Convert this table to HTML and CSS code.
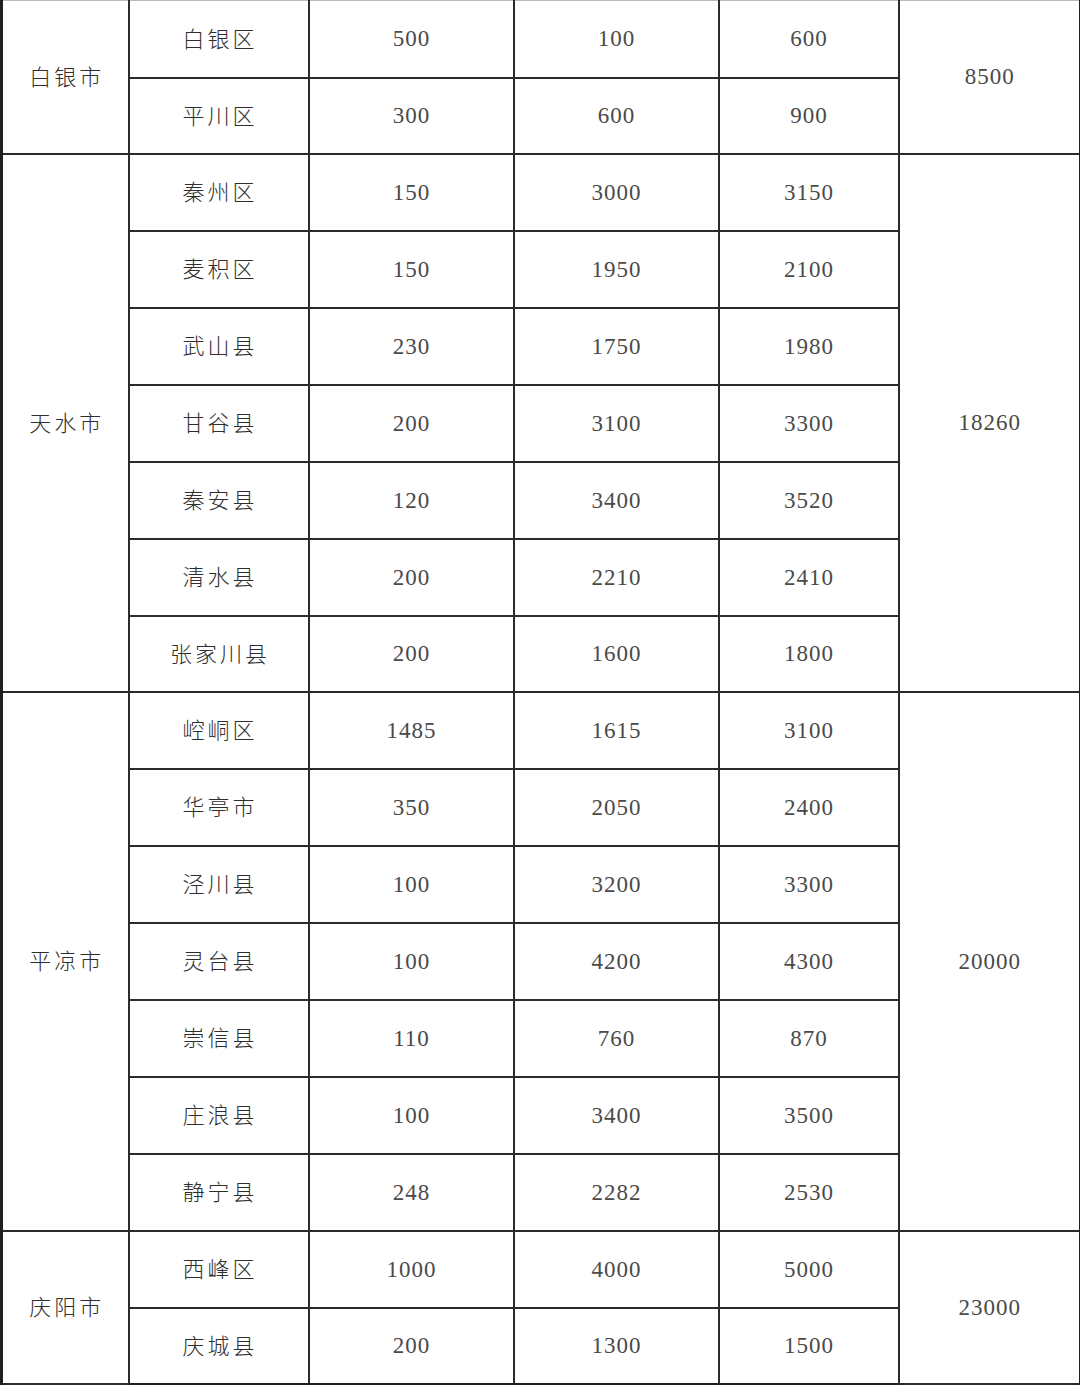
FILE: index.html
```html
<!DOCTYPE html>
<html lang="zh">
<head>
<meta charset="utf-8">
<title>表</title>
<link rel="stylesheet" href="styles.css">
</head>
<body>
<table class="grid">
<colgroup>
<col class="c1"><col class="c2"><col class="c3"><col class="c4"><col class="c5"><col class="c6">
</colgroup>
<tbody>
<tr class="first"><td class="city" rowspan="2">白银市</td><td class="name">白银区</td><td class="num">500</td><td class="num">100</td><td class="num">600</td><td class="num total" rowspan="2">8500</td></tr>
<tr class="short"><td class="name">平川区</td><td class="num">300</td><td class="num">600</td><td class="num">900</td></tr>

<tr><td class="city" rowspan="7">天水市</td><td class="name">秦州区</td><td class="num">150</td><td class="num">3000</td><td class="num">3150</td><td class="num total" rowspan="7">18260</td></tr>
<tr><td class="name">麦积区</td><td class="num">150</td><td class="num">1950</td><td class="num">2100</td></tr>
<tr><td class="name">武山县</td><td class="num">230</td><td class="num">1750</td><td class="num">1980</td></tr>
<tr><td class="name">甘谷县</td><td class="num">200</td><td class="num">3100</td><td class="num">3300</td></tr>
<tr><td class="name">秦安县</td><td class="num">120</td><td class="num">3400</td><td class="num">3520</td></tr>
<tr><td class="name">清水县</td><td class="num">200</td><td class="num">2210</td><td class="num">2410</td></tr>
<tr class="short"><td class="name">张家川县</td><td class="num">200</td><td class="num">1600</td><td class="num">1800</td></tr>

<tr><td class="city" rowspan="7">平凉市</td><td class="name">崆峒区</td><td class="num">1485</td><td class="num">1615</td><td class="num">3100</td><td class="num total" rowspan="7">20000</td></tr>
<tr><td class="name">华亭市</td><td class="num">350</td><td class="num">2050</td><td class="num">2400</td></tr>
<tr><td class="name">泾川县</td><td class="num">100</td><td class="num">3200</td><td class="num">3300</td></tr>
<tr><td class="name">灵台县</td><td class="num">100</td><td class="num">4200</td><td class="num">4300</td></tr>
<tr><td class="name">崇信县</td><td class="num">110</td><td class="num">760</td><td class="num">870</td></tr>
<tr><td class="name">庄浪县</td><td class="num">100</td><td class="num">3400</td><td class="num">3500</td></tr>
<tr><td class="name">静宁县</td><td class="num">248</td><td class="num">2282</td><td class="num">2530</td></tr>

<tr><td class="city" rowspan="2">庆阳市</td><td class="name">西峰区</td><td class="num">1000</td><td class="num">4000</td><td class="num">5000</td><td class="num total" rowspan="2">23000</td></tr>
<tr class="short"><td class="name">庆城县</td><td class="num">200</td><td class="num">1300</td><td class="num">1500</td></tr>
</tbody>
</table>
</body>
</html>
```

FILE: styles.css
```css
html, body {
  margin: 0;
  padding: 0;
  background: #ffffff;
}

.grid {
  width: 1079px;
  border-collapse: collapse;
  table-layout: fixed;
  color: #333333;
}

.c1 { width: 127px; }
.c2 { width: 180px; }
.c3 { width: 205px; }
.c4 { width: 205px; }
.c5 { width: 180px; }
.c6 { width: 182px; }

.grid tr {
  height: 77px;
}

.grid tr.short {
  height: 76px;
}

.grid td {
  padding: 0;
  border: 2px solid #2b2b2b;
  text-align: center;
  vertical-align: middle;
}

.grid tr.first td {
  border-top: 1px solid #b8b8b8;
}

.grid td.city {
  border-left: 3px solid #1e1e1e;
}

.grid td.total {
  border-right: 3px solid #1e1e1e;
}

.grid tr:last-child td,
.grid td.city:last-child {
  border-bottom: 2px solid #1e1e1e;
}

.city,
.name {
  font-family: "Noto Sans CJK SC", "Noto Sans", sans-serif;
  font-weight: 300;
  font-size: 22px;
  letter-spacing: 3px;
  color: #2e2e2e;
}

.grid td.city,
.grid td.name {
  padding: 0 0 4px 3px;
}

.num {
  font-family: "Liberation Serif", "DejaVu Serif", serif;
  font-size: 23px;
  letter-spacing: 1px;
  color: #4a4a4a;
}

.grid td.num {
  padding: 1px 0 0 1px;
}
```
